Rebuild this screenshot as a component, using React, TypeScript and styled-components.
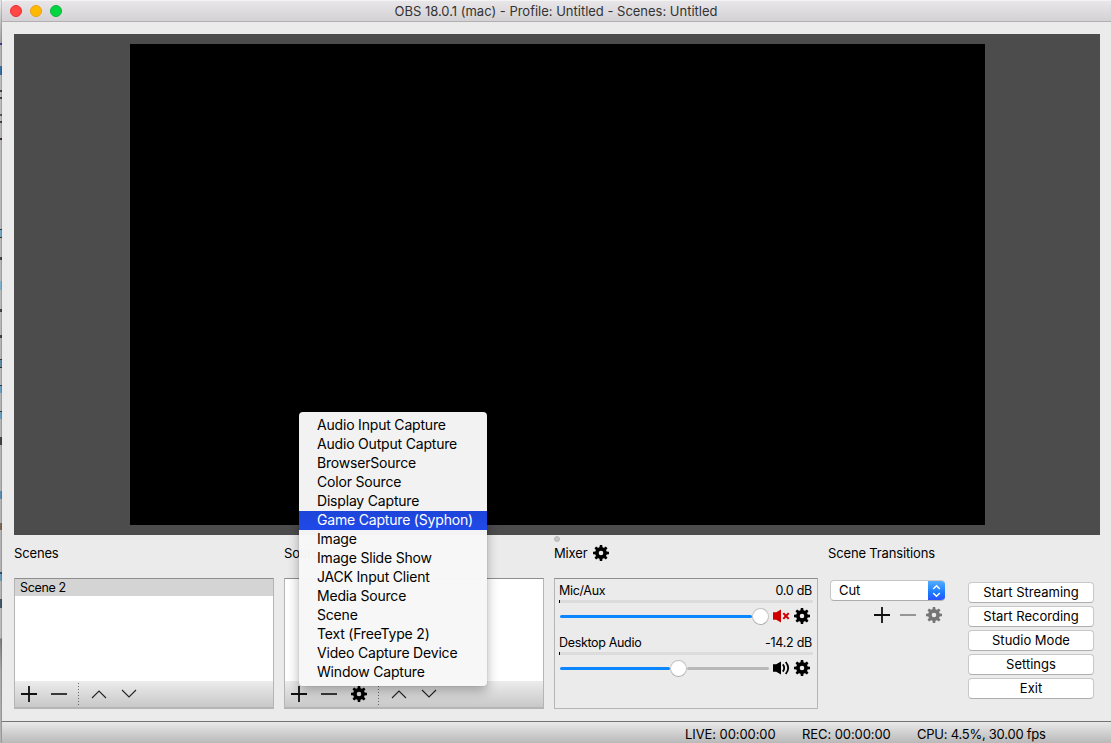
import React from "react";
import styled, { createGlobalStyle, css } from "styled-components";

const GlobalStyle = createGlobalStyle`
  *, *::before, *::after { box-sizing: border-box; }
  html, body { margin: 0; padding: 0; }
  body {
    width: 1111px;
    height: 743px;
    overflow: hidden;
    font-family: Inter, "Liberation Sans", sans-serif;
    font-size: 13px;
    color: #000;
  }
`;

const Desktop = styled.div`
  display: flex;
  width: 1111px;
  height: 743px;
  overflow: hidden;
`;

const BackgroundSliver = styled.div`
  flex: none;
  width: 2px;
  border-right: 1px solid rgba(0, 0, 0, 0.14);
  background: linear-gradient(
    #e4e4e4 0 4px, #c4c4c4 20px, #a5a5a5 43px, #3b3f8c 43px 45px, #b4b4b4 45px 66px,
    #3a6ea5 66px 75px, #bcbcbc 75px 90px, #444 90px 92px, #bcbcbc 92px 97px, #444 97px 99px,
    #bcbcbc 99px 114px, #555 114px 116px, #bcbcbc 116px 121px, #444 121px 123px, #b6b6b6 123px 138px,
    #3d2a2a 138px 140px, #b8b8b8 140px 229px, #2c3944 229px 230px, #75a7c4 230px 237px, #333 237px 238px,
    #b8b8b8 238px 257px, #444 257px 260px, #b8b8b8 260px 281px, #7fb0cc 281px 290px, #b8b8b8 290px 309px,
    #444 309px 312px, #b8b8b8 312px 335px, #444 335px 338px, #b4b4b4 338px 359px, #2c3944 359px 360px,
    #5f8ca0 360px 367px, #333 367px 368px, #b8b8b8 368px 385px, #2c3944 385px 386px, #6aa0c0 386px 393px,
    #b4b4b4 393px 411px, #2c3944 411px 412px, #6aa0c0 412px 419px, #b4b4b4 419px 437px, #444 437px 445px,
    #b4b4b4 445px 491px, #5d8eb0 491px 499px, #b4b4b4 499px 523px, #7d6a58 523px 530px, #b4b4b4 530px 572px,
    #35526a 572px 574px, #6c9cbc 574px 581px, #b4b4b4 581px 599px, #445a68 599px 608px, #bcbcbc 608px 638px,
    #808080 639px, #a8a8a8 670px, #b4b4b4
  );
`;

const Window = styled.main`
  flex: 1;
  display: flex;
  flex-direction: column;
  background: #ebebeb;
  border-top-left-radius: 4px;
  overflow: hidden;
`;

const TitleBar = styled.header`
  display: grid;
  grid-template-columns: 1fr auto 1fr;
  align-items: center;
  flex: none;
  height: 22px;
  padding: 0 0 0 8px;
  border-top: 1px solid #f4f3f4;
  border-bottom: 1px solid #b1afb1;
  background: linear-gradient(#e8e6e8, #d3d1d3);
`;

const Lights = styled.div`
  display: flex;
  gap: 8px;
`;

const Light = styled.span<{ $fill: string; $edge: string }>`
  width: 12px;
  height: 12px;
  border-radius: 50%;
  background: ${(p) => p.$fill};
  border: 1px solid ${(p) => p.$edge};
`;

const Title = styled.h1`
  margin: 0 9px 0 0;
  font-size: 13px;
  font-weight: 400;
  line-height: 18px;
  letter-spacing: -0.01px;
  color: #333;
`;

const Preview = styled.section`
  flex: none;
  height: 501px;
  margin: 12px 11px 0 12px;
  padding: 10px 115px 10px 116px;
  background: #4c4c4c;
  display: flex;
`;

const Canvas = styled.div`
  flex: 1;
  background: #000;
`;

const Docks = styled.section`
  position: relative;
  flex: 1;
  display: flex;
  align-items: flex-start;
  gap: 10px;
  padding-left: 12px;
`;

const SplitterDot = styled.span`
  position: absolute;
  left: 552px;
  top: 1px;
  width: 6px;
  height: 6px;
  border-radius: 50%;
  background: #c6c6c6;
  border: 1px solid #b8b8b8;
`;

const Dock = styled.section<{ $width: number }>`
  flex: none;
  width: ${(p) => p.$width}px;
`;

const DockHeading = styled.h2`
  display: flex;
  align-items: center;
  gap: 6px;
  height: 43px;
  margin: 0;
  padding-bottom: 7px;
  font-size: 13px;
  font-weight: 400;
  letter-spacing: -0.15px;
`;

const frame = css`
  height: 131px;
  border: 1px solid #b5b5b5;
  border-top-color: #8e8e8e;
`;

const ListFrame = styled.div`
  ${frame}
  display: flex;
  flex-direction: column;
  border-bottom-width: 2px;
  background: #fff;
`;

const ListBody = styled.div`
  flex: 1;
`;

const ListRow = styled.div`
  height: 17px;
  padding-left: 5px;
  background: #d4d4d4;
  font-size: 12.5px;
  line-height: 18px;
  letter-spacing: -0.34px;
`;

const Toolbar = styled.div`
  display: flex;
  align-items: center;
  height: 26px;
  padding: 0 0 0 6px;
  gap: 14px;
  background: linear-gradient(#ececec, #c8c8c8);
`;

const ToolSeparator = styled.span`
  width: 1px;
  height: 22px;
  margin: 0 -2px 0 -3px;
  background: repeating-linear-gradient(#666 0 1px, transparent 1px 3px);
`;

const IconSvg = styled.svg`
  display: block;
  flex: none;
`;

const MixerFrame = styled.div`
  ${frame}
  padding: 3px 4px;
`;

const Channel = styled.div`
  height: 52px;
`;

const ChannelHead = styled.div`
  display: flex;
  justify-content: space-between;
  height: 18px;
  padding-right: 1px;
  font-size: 12.5px;
  line-height: 18px;
`;

const ChannelName = styled.span`
  letter-spacing: -0.33px;
`;

const ChannelLevel = styled.span`
  letter-spacing: -0.26px;
`;

const Meter = styled.div`
  height: 3px;
  border-left: 1px solid #000;
  background: #dcdcdc;
`;

const ChannelControls = styled.div`
  display: flex;
  align-items: flex-start;
  height: 17px;
  margin-top: 5px;
  padding-left: 1px;
`;

const SliderTrack = styled.div`
  display: flex;
  align-items: center;
  width: 210px;
  padding-right: 1px;
  margin-right: 3px;
`;

const Groove = styled.span<{ $width: number; $active?: boolean }>`
  flex: 0 1 ${(p) => p.$width}px;
  height: 3px;
  border-radius: 2px;
  background: ${(p) => (p.$active ? "#0a87ff" : "#b8b8b8")};
`;

const Knob = styled.span`
  flex: none;
  width: 17px;
  height: 17px;
  border-radius: 50%;
  background: #fff;
  border: 1px solid #c2c2c2;
  border-bottom-color: #aaa;
`;

const GearSlot = styled.span`
  margin-left: 4px;
`;

const Select = styled.div`
  display: flex;
  width: 115px;
  height: 21px;
  margin: 2px 0 0 2px;
  border-radius: 4px;
  border: 1px solid #c6c6c6;
  border-bottom-color: #adadad;
  border-right: 0;
  background: #fff;
  overflow: hidden;
`;

const SelectValue = styled.span`
  flex: 1;
  padding-left: 8px;
  font-size: 13px;
  line-height: 18px;
  letter-spacing: -0.1px;
`;

const SelectArrows = styled.span`
  display: flex;
  align-items: center;
  justify-content: center;
  width: 17px;
  height: 21px;
  margin-top: -1px;
  background: linear-gradient(#58b0fc, #1a7bff 60%, #2d4dff);
`;

const TransitionTools = styled.div`
  display: flex;
  align-items: center;
  gap: 10px;
  margin: 6px 0 0 46px;
`;

const Controls = styled.div`
  display: flex;
  flex-direction: column;
  gap: 3px;
  width: 126px;
  padding-top: 47px;
`;

const PushButton = styled.button`
  height: 21px;
  padding: 0 0 1px;
  border: 1px solid #c8c8c8;
  border-bottom-color: #aeaeae;
  border-radius: 4px;
  background: #fff;
  color: #000;
  font: 400 13px/18px Inter, "Liberation Sans", sans-serif;
  letter-spacing: 0;
`;

const StatusBar = styled.footer`
  flex: none;
  display: flex;
  height: 22px;
  padding: 3px 0 0 683px;
  border-top: 1px solid #747474;
  background: linear-gradient(#e9e9e9, #b9b9b9);
  line-height: 18px;
`;

const Status = styled.span<{ $width: number; $tracking: number }>`
  width: ${(p) => p.$width}px;
  white-space: nowrap;
  letter-spacing: ${(p) => p.$tracking}px;
`;

const Menu = styled.ul`
  position: absolute;
  left: 299px;
  top: 412px;
  width: 188px;
  margin: 0;
  padding: 4px 0;
  list-style: none;
  border-radius: 4px;
  background: rgba(247, 247, 247, 0.98);
  box-shadow: 0 0 1px rgba(0, 0, 0, 0.35), 0 5px 12px rgba(0, 0, 0, 0.3);
`;

const MenuItem = styled.li<{ $active: boolean }>`
  height: 19px;
  padding-left: 18px;
  font-size: 14px;
  line-height: 17px;
  letter-spacing: -0.19px;
  white-space: nowrap;
  color: ${(p) => (p.$active ? "#fff" : "#000")};
  background: ${(p) => (p.$active ? "linear-gradient(#1d45d8, #2049ea)" : "none")};
`;

const Gear = ({ color = "#000" }: { color?: string }) => (
  <IconSvg width="16" height="16" viewBox="0 0 16 16">
    <circle cx="8" cy="8" r="4.1" fill="none" stroke={color} strokeWidth="3.6" />
    {[0, 45, 90, 135, 180, 225, 270, 315].map((angle) => (
      <path key={angle} d="M6.4 3 6.8 0h2.4l.4 3z" fill={color} transform={`rotate(${angle} 8 8)`} />
    ))}
  </IconSvg>
);

const Plus = () => (
  <IconSvg width="16" height="16" viewBox="0 0 16 16">
    <path d="M0 8h16M8 0v16" stroke="#111" strokeWidth="1.8" />
  </IconSvg>
);

const Minus = ({ color = "#262626" }: { color?: string }) => (
  <IconSvg width="16" height="16" viewBox="0 0 16 16">
    <path d="M0 8h16" stroke={color} strokeWidth="1.8" />
  </IconSvg>
);

const Chevron = ({ down = false }: { down?: boolean }) => (
  <IconSvg width="16" height="16" viewBox="0 0 16 16">
    <path d={down ? "M1 4l7 7 7-7" : "M1 12l7-7 7 7"} fill="none" stroke="#222" strokeWidth="1.1" />
  </IconSvg>
);

const Speaker = ({ muted }: { muted: boolean }) => (
  <IconSvg width="17" height="16" viewBox="0 0 17 16">
    <path d="M0 4.2h3.2L8 1.4v13.2l-4.8-2.8H0z" fill={muted ? "#d00000" : "#000"} />
    {muted ? (
      <path d="M10.3 5.1l5.4 5.8M15.7 5.1l-5.4 5.8" stroke="#d00000" strokeWidth="2.1" />
    ) : (
      <path d="M9.8 4.4q2.8 3.6 0 7.2M12.7 2q5 6 0 12" fill="none" stroke="#000" strokeWidth="1.8" />
    )}
  </IconSvg>
);

const Arrows = () => (
  <IconSvg width="9" height="14" viewBox="0 0 9 14">
    <path d="M1.2 5l3.3-3.2L7.8 5M1.2 9l3.3 3.2L7.8 9" fill="none" stroke="#fff" strokeWidth="1.5" />
  </IconSvg>
);

const menuItems = [
  "Audio Input Capture", "Audio Output Capture", "BrowserSource", "Color Source", "Display Capture",
  "Game Capture (Syphon)", "Image", "Image Slide Show", "JACK Input Client", "Media Source", "Scene",
  "Text (FreeType 2)", "Video Capture Device", "Window Capture",
];

const channels = [
  { name: "Mic/Aux", level: "0.0 dB", filled: 193, muted: true },
  { name: "Desktop Audio", level: "-14.2 dB", filled: 111, muted: false },
];

const ListTools = ({ gear = false }: { gear?: boolean }) => (
  <Toolbar>
    <Plus />
    <Minus />
    {gear && <Gear />}
    <ToolSeparator />
    <Chevron />
    <Chevron down />
  </Toolbar>
);

export default function App() {
  return (
    <>
      <GlobalStyle />
      <Desktop>
        <BackgroundSliver />
        <Window>
          <TitleBar>
            <Lights>
              <Light $fill="#ff4744" $edge="#f02c30" />
              <Light $fill="#ffb900" $edge="#eda015" />
              <Light $fill="#00d742" $edge="#14b038" />
            </Lights>
            <Title>OBS 18.0.1 (mac) - Profile: Untitled - Scenes: Untitled</Title>
          </TitleBar>
          <Preview>
            <Canvas />
          </Preview>
          <Docks>
            <SplitterDot />
            <Dock $width={260}>
              <DockHeading>Scenes</DockHeading>
              <ListFrame>
                <ListBody>
                  <ListRow>Scene 2</ListRow>
                </ListBody>
                <ListTools />
              </ListFrame>
            </Dock>
            <Dock $width={260}>
              <DockHeading>Sources</DockHeading>
              <ListFrame>
                <ListBody />
                <ListTools gear />
              </ListFrame>
            </Dock>
            <Dock $width={264}>
              <DockHeading>
                Mixer <Gear />
              </DockHeading>
              <MixerFrame>
                {channels.map((c) => (
                  <Channel key={c.name}>
                    <ChannelHead>
                      <ChannelName>{c.name}</ChannelName>
                      <ChannelLevel>{c.level}</ChannelLevel>
                    </ChannelHead>
                    <Meter />
                    <ChannelControls>
                      <SliderTrack>
                        <Groove $width={c.filled} $active />
                        <Knob />
                        <Groove $width={193 - c.filled} />
                      </SliderTrack>
                      <Speaker muted={c.muted} />
                      <GearSlot>
                        <Gear />
                      </GearSlot>
                    </ChannelControls>
                  </Channel>
                ))}
              </MixerFrame>
            </Dock>
            <Dock $width={130}>
              <DockHeading>Scene Transitions</DockHeading>
              <Select>
                <SelectValue>Cut</SelectValue>
                <SelectArrows>
                  <Arrows />
                </SelectArrows>
              </Select>
              <TransitionTools>
                <Plus />
                <Minus color="#8c8c8c" />
                <Gear color="#757575" />
              </TransitionTools>
            </Dock>
            <Controls>
              {["Start Streaming", "Start Recording", "Studio Mode", "Settings", "Exit"].map((label) => (
                <PushButton key={label}>{label}</PushButton>
              ))}
            </Controls>
          </Docks>
          <StatusBar>
            <Status $width={117} $tracking={-0.08}>LIVE: 00:00:00</Status>
            <Status $width={115} $tracking={-0.08}>REC: 00:00:00</Status>
            <Status $width={130} $tracking={-0.24}>CPU: 4.5%, 30.00 fps</Status>
          </StatusBar>
        </Window>
        <Menu>
          {menuItems.map((item) => (
            <MenuItem key={item} $active={item === "Game Capture (Syphon)"}>
              {item}
            </MenuItem>
          ))}
        </Menu>
      </Desktop>
    </>
  );
}
